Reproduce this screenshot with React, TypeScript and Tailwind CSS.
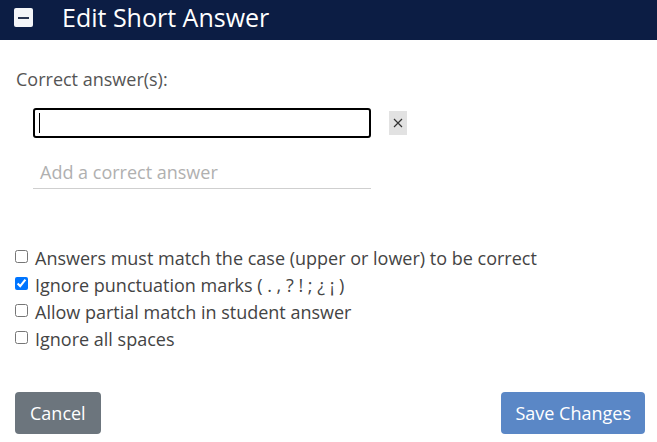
import React from "react";

const opts = [
  { label: "Answers must match the case (upper or lower) to be correct", checked: false },
  { label: "Ignore punctuation marks ( . , ? ! ; ¿ ¡ )", checked: true },
  { label: "Allow partial match in student answer", checked: false },
  { label: "Ignore all spaces", checked: false },
];

export default function App() {
  return (
    <div className="w-[657px] h-[442px] bg-white overflow-hidden" style={{ fontFamily: '"Open Sans", sans-serif' }}>
      <div className="h-10 bg-[#0c1d44] flex items-center pl-[14px]">
        <div className="w-[19px] h-[19px] mb-[5px] bg-[#f4f5f8] rounded-[2px] flex items-center justify-center">
          <div className="w-[11px] h-[2px] bg-[#2a3550]" />
        </div>
        <div className="ml-[29px] mb-[6px] text-white text-[25px] leading-[34px]">Edit Short Answer</div>
      </div>
      <div className="px-4">
        <div className="mt-[27px] text-[18px] leading-[24px] text-[#555]">Correct answer(s):</div>
        <div className="mt-[17px] ml-[17px] flex items-center">
          <div className="w-[338px] h-[30px] border-2 border-black rounded-[3px] flex items-center pl-[4px]">
            <div className="w-px h-[20px] bg-black" />
          </div>
          <div className="ml-[18px] w-[18px] h-[24px] bg-[#e2e2e2] flex items-center justify-center">
            <svg width="10" height="10" viewBox="0 0 10 10"><path d="M1 1 L9 9 M9 1 L1 9" stroke="#333" strokeWidth="1.2" /></svg>
          </div>
        </div>
        <div className="mt-[22px] ml-[17px] w-[338px] border-b border-[#cfcfcf] pl-[7px] pb-[3px] text-[18px] leading-[25px] text-[#b0b0b0]">
          Add a correct answer
        </div>
        <div className="mt-[56px] flex flex-col">
          {opts.map((o) => (
            <label key={o.label} className="flex items-center h-[27px] leading-[27px] text-[18px] text-[#444]">
              <input type="checkbox" defaultChecked={o.checked} className="w-[13px] h-[13px] m-0 ml-[-1px] mr-[7px] mb-[4px]" />
              <span>{o.label}</span>
            </label>
          ))}
        </div>
      </div>
      <div className="mt-[39px] flex justify-between pl-[15px] pr-[12px]">
        <button className="h-[42px] px-[15px] rounded-[4px] bg-[#6c757d] text-white text-[18px]">Cancel</button>
        <button className="h-[42px] px-[14px] rounded-[4px] bg-[#5a87c6] text-white text-[18px]">Save Changes</button>
      </div>
    </div>
  );
}
